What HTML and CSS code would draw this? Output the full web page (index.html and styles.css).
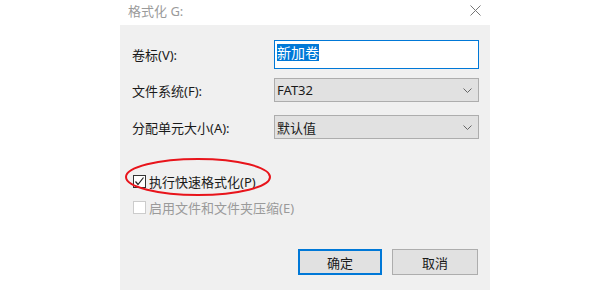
FILE: index.html
```html
<!DOCTYPE html>
<html lang="zh-CN">
<head>
    <meta charset="UTF-8">
    <title>格式化 G:</title>
    <link rel="stylesheet" href="styles.css">
</head>
<body>
    <div class="dialog">
        <div class="titlebar">
            <span class="title">格式化 G:</span>
            <svg class="close" width="11" height="11" viewBox="0 0 11 11">
                <path d="M0.5 0.5 L10.5 10.5 M10.5 0.5 L0.5 10.5" stroke="#777" stroke-width="1" fill="none"/>
            </svg>
        </div>

        <div class="panel">
            <div class="row row-first">
                <label class="label">卷标(V):</label>
                <div class="field input"><span class="selected">新加卷</span></div>
            </div>
            <div class="row row-second">
                <label class="label">文件系统(F):</label>
                <div class="field select">
                    <span>FAT32</span>
                    <svg width="9" height="5" viewBox="0 0 9 5"><path d="M0.5 0.5 L4.5 4.5 L8.5 0.5" stroke="#666" fill="none"/></svg>
                </div>
            </div>
            <div class="row">
                <label class="label">分配单元大小(A):</label>
                <div class="field select">
                    <span>默认值</span>
                    <svg width="9" height="5" viewBox="0 0 9 5"><path d="M0.5 0.5 L4.5 4.5 L8.5 0.5" stroke="#666" fill="none"/></svg>
                </div>
            </div>

            <div class="options">
                <div class="check">
                    <span class="box">
                        <svg width="11" height="11" viewBox="0 0 11 11"><path d="M1.5 5.5 L4 8.5 L9.5 1.5" stroke="#222" stroke-width="1.2" fill="none"/></svg>
                    </span>
                    <span>执行快速格式化(P)</span>
                </div>
                <div class="check disabled">
                    <span class="box"></span>
                    <span>启用文件和文件夹压缩(E)</span>
                </div>
            </div>

            <div class="buttons">
                <button class="btn btn-default">确定</button>
                <button class="btn btn-cancel">取消</button>
            </div>

            <!-- 红色圈注 -->
            <svg class="mark" width="150" height="40" viewBox="0 0 150 40">
                <ellipse cx="75" cy="20" rx="72" ry="18" stroke="#e8141b" stroke-width="2" fill="none"/>
            </svg>
        </div>
    </div>
</body>
</html>
```

FILE: styles.css
```css
body {
    margin: 0;
    background: #fff;
    font-family: "Noto Sans", "Noto Sans CJK SC", sans-serif;
    font-size: 13px;
    color: #1a1a1a;
}

.dialog {
    width: 370px;
    margin-left: 120px;
}

.titlebar {
    height: 25px;
    display: flex;
    align-items: center;
    justify-content: space-between;
    padding: 0 9px 4px 8px;
    box-sizing: border-box;
}

.title {
    color: #9a9a9a;
    font-size: 13px;
}

.panel {
    position: relative;
    background: #f0f0f0;
    height: 265px;
    box-sizing: border-box;
    padding: 15px 11px 0 12px;
}

.row {
    display: flex;
    align-items: center;
    margin-bottom: 13px;
}

.row-first {
    margin-bottom: 9px;
}

.label {
    width: 142px;
}

.field {
    width: 205px;
    height: 24px;
    box-sizing: border-box;
    display: flex;
    align-items: center;
    padding: 0 6px 0 2px;
}

.input {
    height: 29px;
    background: #fff;
    border: 1px solid #0078d7;
}

.selected {
    background: #0078d7;
    color: #fff;
    font-size: 14px;
    line-height: 17px;
    margin-top: -4px;
}

.select {
    background: #e1e1e1;
    border: 1px solid #adadad;
    justify-content: space-between;
}

.options {
    margin-top: 36px;
    padding-left: 1px;
}

.check {
    display: flex;
    align-items: center;
    gap: 3px;
    height: 13px;
    margin-bottom: 13px;
}

.box {
    width: 13px;
    height: 13px;
    box-sizing: border-box;
    border: 1px solid #333;
    background: #fff;
    display: flex;
    align-items: center;
    justify-content: center;
}

.disabled {
    color: #9a9a9a;
}

.disabled .box {
    border-color: #cccccc;
}

.buttons {
    display: flex;
    justify-content: flex-end;
    gap: 10px;
    margin-top: 35px;
    padding-right: 1px;
}

.btn {
    height: 26px;
    background: #e1e1e1;
    border: 1px solid #adadad;
    font-family: inherit;
    font-size: 13px;
    color: #1a1a1a;
    padding: 0;
}

.btn-default {
    width: 84px;
    border: 2px solid #0078d7;
}

.btn-cancel {
    width: 86px;
}

.mark {
    position: absolute;
    left: 3px;
    top: 132px;
}
```
